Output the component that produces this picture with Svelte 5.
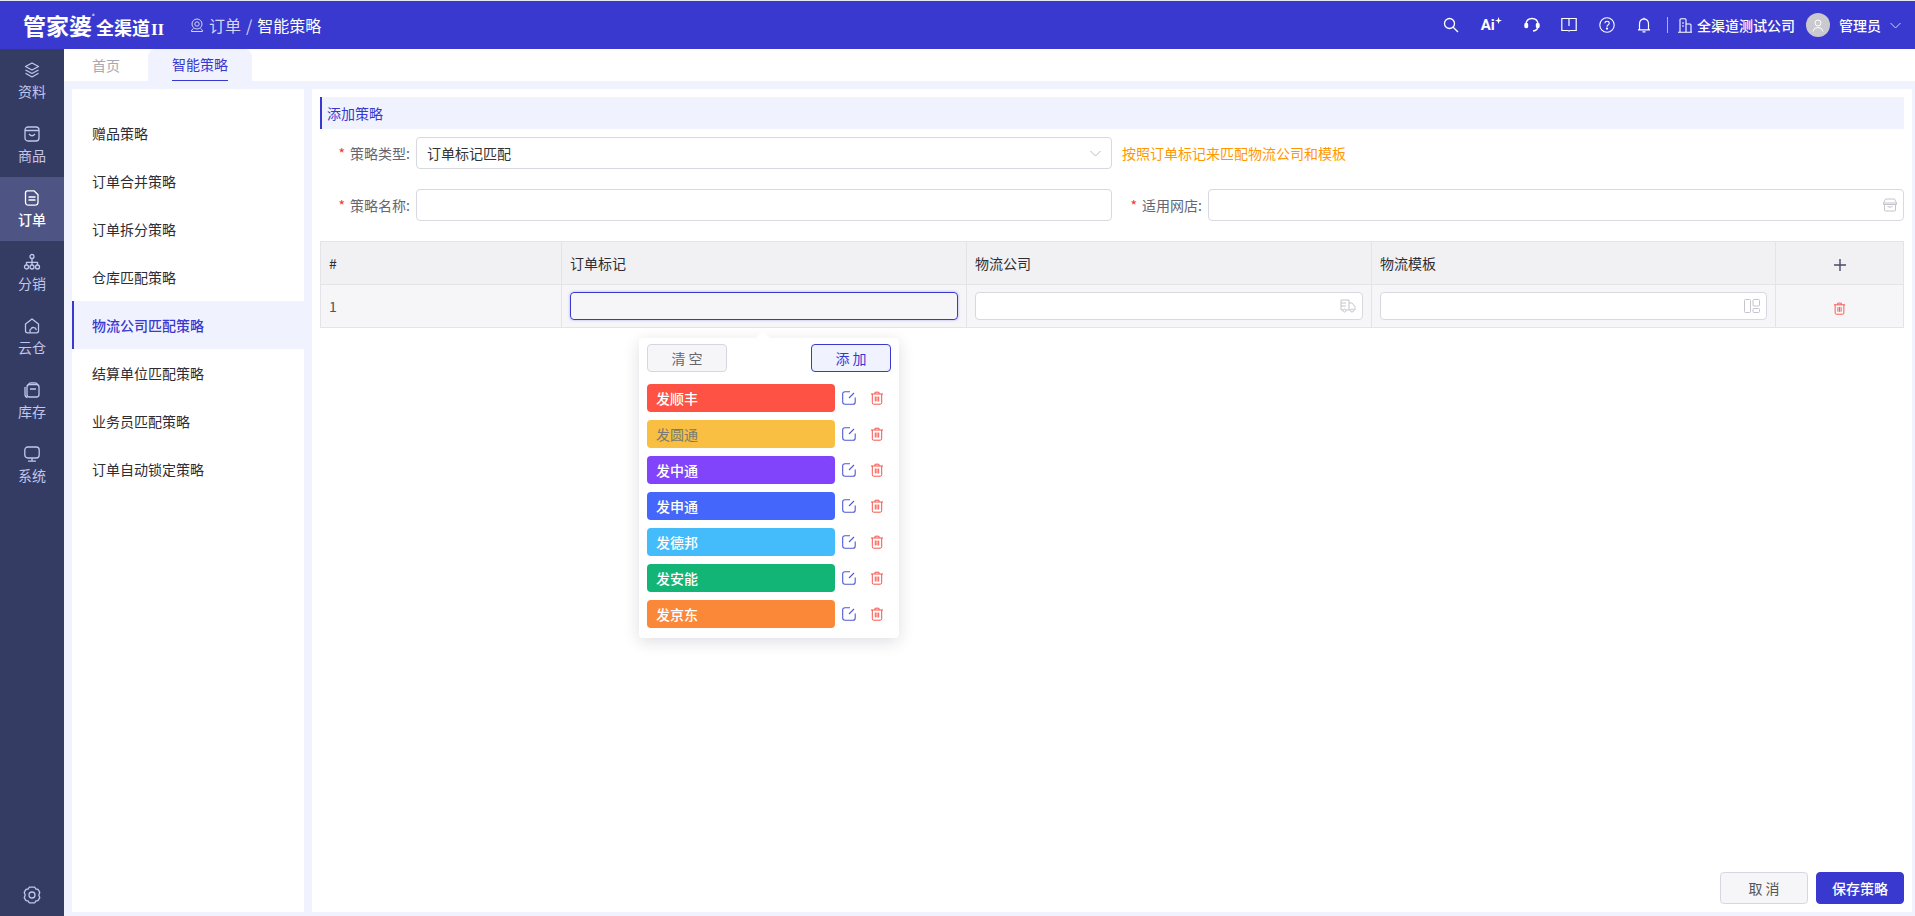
<script lang="ts">
  const railItems = [
    { id: "data", label: "资料" },
    { id: "goods", label: "商品" },
    { id: "order", label: "订单", active: true },
    { id: "dist", label: "分销" },
    { id: "cloud", label: "云仓" },
    { id: "stock", label: "库存" },
    { id: "system", label: "系统" },
  ];

  const strategies = ["赠品策略", "订单合并策略", "订单拆分策略", "仓库匹配策略", "物流公司匹配策略", "结算单位匹配策略", "业务员匹配策略", "订单自动锁定策略"];
  let activeStrategy = $state("物流公司匹配策略");

  const tags = [
    { label: "发顺丰", color: "#fd5244" },
    { label: "发圆通", color: "#f8bf42", muted: true },
    { label: "发中通", color: "#8244fa" },
    { label: "发申通", color: "#4466fb" },
    { label: "发德邦", color: "#44bbfb" },
    { label: "发安能", color: "#12b575" },
    { label: "发京东", color: "#fa8838" },
  ];
</script>

{#snippet trash(size = 14)}
  <svg class="trash" width={size} height={size} viewBox="0 0 14 14" fill="none" stroke="currentColor" stroke-width="1">
    <path d="M1 3h12M5 3V1.2h4V3M2.3 3v8.8q0 1.4 1.4 1.4h6.6q1.4 0 1.4-1.4V3M5.3 5.5v5M7 5.5v5M8.7 5.5v5" />
  </svg>
{/snippet}

{#snippet edit()}
  <svg class="edit" width="14" height="14" viewBox="0 0 14 14" fill="none" stroke="currentColor" stroke-width="1.1">
    <path d="M8 .8H3Q.7.8.7 3v8q0 2.2 2.3 2.2h8q2.2 0 2.2-2.3V6.5" />
    <path d="M7 7l5-5" />
  </svg>
{/snippet}

{#snippet railIcon(id: string)}
  <svg width="18" height="18" viewBox="0 0 18 18" fill="none" stroke="currentColor" stroke-width="1.3" stroke-linejoin="round">
    {#if id === "data"}
      <path d="M9 2l6.5 3.5L9 9 2.500 5.500zM2.500 9L9 12.500 15.500 9M2.500 12.300L9 16l6.500-3.700" />
    {:else if id === "goods"}
      <rect x="2" y="2" width="14" height="14" rx="3" /><path d="M2 5.500h14M6 9q3 3.500 6 0" />
    {:else if id === "order"}
      <path d="M4.500 1.800h6.500l4 4V13q0 3.200-3.200 3.200H5.500Q2.500 16.200 2.500 13V4q0-2.200 2-2.200zM5.500 8h7M5.500 11h7" />
    {:else if id === "dist"}
      <circle cx="9" cy="3.500" r="2" /><circle cx="3.500" cy="14" r="2" /><circle cx="9" cy="14" r="2" /><circle cx="14.500" cy="14" r="2" /><path d="M9 5.500V12M3.500 12V9.300h11V12" />
    {:else if id === "cloud"}
      <path d="M7 15.800H4.500Q2.500 15.800 2.500 13.800V7L9 2l6.500 5v6.800q0 2-2 2H7zM7.500 15q-1.500-2 .5-3 .8-2 3-1.300 2.300.2 2 2.500" />
    {:else if id === "stock"}
      <rect x="4" y="3.500" width="12" height="12.500" rx="2.500" /><path d="M2 6v7.500Q2 16 4.500 16.500M5.500 3.500Q6 1.800 8 1.800h4q2 0 2.500 1.700M7 8h6" />
    {:else if id === "system"}
      <rect x="1.800" y="2" width="14.400" height="11" rx="3" /><path d="M9 13v3M5 16.200h8" />
    {/if}
  </svg>
{/snippet}

<div class="app">
  <header class="topbar">
    <div class="logo"><span class="logo-main">管家婆</span><sup>®</sup><span class="logo-sub">全渠道</span><span class="logo-ii">II</span></div>
    <div class="crumbs">
      <svg width="14" height="15" viewBox="0 0 14 15" fill="none" stroke="currentColor" stroke-width="1">
        <circle cx="7" cy="6" r="5" /><circle cx="7" cy="6" r="2.200" /><path d="M3.500 10.500Q1 12 1.500 13.500h11q.5-1.500-2-3" />
      </svg>
      <span class="crumb-parent">订单</span>
      <span class="crumb-sep">/</span>
      <span class="crumb-current">智能策略</span>
    </div>

    <div class="tools">
      <svg width="16" height="16" viewBox="0 0 16 16" fill="none" stroke="currentColor" stroke-width="1.300"><circle cx="6.500" cy="6.500" r="5" /><path d="M10.200 10.200L15 15" /></svg>
      <span class="ai">Ai<svg width="7" height="7" viewBox="0 0 8 8"><path d="M4 0l1 3 3 1-3 1-1 3-1-3-3-1 3-1z" fill="currentColor" /></svg></span>
      <svg width="16" height="16" viewBox="0 0 16 16" fill="none" stroke="currentColor" stroke-width="1.400"><path d="M2 9V7q.500-5.500 6-5.500T14 7v2q0 4.500-5 5" /><rect x="1" y="6.500" width="2.500" height="4" rx="1" fill="currentColor" /><rect x="12.500" y="6.500" width="2.500" height="4" rx="1" fill="currentColor" /></svg>
      <svg width="16" height="16" viewBox="0 0 16 16" fill="none" stroke="currentColor" stroke-width="1.200"><path d="M.800 1.500h14.400v12H9q-1 0-1 1-.1-1-1-1H.800zM8 1.500V9" /></svg>
      <svg width="16" height="16" viewBox="0 0 16 16" fill="none" stroke="currentColor" stroke-width="1.100"><circle cx="8" cy="8" r="7.200" /><path d="M5.800 6.300Q6 4.300 8 4.300q2.200 0 2.200 1.900 0 1.100-1.200 1.700Q8 8.400 8 9.800" /><circle cx="8" cy="11.600" r=".6" fill="currentColor" /></svg>
      <svg width="14" height="16" viewBox="0 0 14 16" fill="none" stroke="currentColor" stroke-width="1.200"><path d="M1 12.800h12M2.500 12.800V7q0-4.800 4.500-5.200Q11.500 2.200 11.500 7v5.800M5.500 14.800h3M7 1.800V.8" /></svg>
    </div>
    <span class="divider"></span>
    <div class="company">
      <svg width="14" height="15" viewBox="0 0 14 15" fill="none" stroke="currentColor" stroke-width="1.100"><path d="M0 14.300h14M2 14.300V1.800q0-1 1-1h4q1 0 1 1v12.500M8 6h4q1 0 1 1v7.300M4 5h2M4 8h2" /></svg>
      <span>全渠道测试公司</span>
    </div>
    <span class="avatar">
      <svg width="12" height="13" viewBox="0 0 12 13" fill="none" stroke="#fff" stroke-width="1"><circle cx="6" cy="4" r="3" /><path d="M1 12.500Q1.500 8.500 6 8.500t5 4" /></svg>
    </span>
    <span class="user">管理员</span>
    <svg class="chevron" width="11" height="7" viewBox="0 0 11 7" fill="none" stroke="currentColor" stroke-width="1"><path d="M.500 1l5 5 5-5" /></svg>
  </header>

  <div class="body">
    <aside class="rail">
      {#each railItems as item (item.id)}
        <div class="rail-item" class:active={item.active}>
          {@render railIcon(item.id)}
          <span>{item.label}</span>
        </div>
      {/each}
      <div class="rail-gear">
        <svg width="20" height="20" viewBox="0 0 20 20" fill="none" stroke="currentColor" stroke-width="1.300" stroke-linejoin="round">
          <path d="M7.200 2.200h5.600l1 1.800 2.200.3 1.800 3-1 2.700 1 2.700-1.800 3-2.200.3-1 1.800H7.200l-1-1.800-2.200-.3-1.800-3 1-2.700-1-2.700 1.800-3 2.200-.3z" />
          <circle cx="10" cy="10" r="3" />
        </svg>
      </div>
    </aside>

    <div class="page">
      <div class="tabs">
        <span class="tab">首页</span>
        <span class="tab current"><span>智能策略</span></span>
      </div>

      <div class="work">
        <nav class="strategies">
          {#each strategies as name (name)}
            <button type="button" class="strategy" class:active={name === activeStrategy} onclick={() => (activeStrategy = name)}>{name}</button>
          {/each}
        </nav>

        <main class="editor">
          <div class="section-title">添加策略</div>

          <div class="form-row first">
            <label class="field-label" for="kind">策略类型:</label>
            <div class="select" id="kind">
              <span>订单标记匹配</span>
              <svg width="11" height="7" viewBox="0 0 11 7" fill="none" stroke="#b9b9c4" stroke-width="1"><path d="M.500 1l5 5 5-5" /></svg>
            </div>
            <span class="hint">按照订单标记来匹配物流公司和模板</span>
          </div>

          <div class="form-row">
            <label class="field-label" for="name">策略名称:</label>
            <input class="text-input name" id="name" />
            <label class="field-label" for="shop">适用网店:</label>
            <div class="with-icon grow">
              <input class="text-input" id="shop" />
              <svg width="14" height="14" viewBox="0 0 14 14" fill="none" stroke="#c4c4cc" stroke-width="1"><path d="M2.500 1h9L13.500 5v1.500H.5V5zM1.500 6.500V12q0 1 1 1h9q1 0 1-1V6.500M.5 5h13M4.500 8.500q2.500 1.500 5 0" /></svg>
            </div>
          </div>

          <table class="rules">
            <colgroup>
              <col style="width: 241px" /><col style="width: 405px" /><col style="width: 405px" /><col style="width: 404px" /><col />
            </colgroup>
            <thead>
              <tr>
                <th>#</th>
                <th>订单标记</th>
                <th>物流公司</th>
                <th>物流模板</th>
                <th class="center">
                  <svg width="12" height="12" viewBox="0 0 12 12" stroke="#4a4a68" stroke-width="1.400"><path d="M6 0v12M0 6h12" /></svg>
                </th>
              </tr>
            </thead>
            <tbody>
              <tr>
                <td>1</td>
                <td class="mark-cell">
                  <div class="mark-input"></div>
                  <div class="popover">
                    <div class="pop-actions">
                      <button type="button" class="pop-btn">清 空</button>
                      <button type="button" class="pop-btn primary">添 加</button>
                    </div>
                    {#each tags as tag (tag.label)}
                      <div class="tag-row">
                        <span class="tag" class:muted={tag.muted} style="background: {tag.color}">{tag.label}</span>
                        <span class="tag-icon">{@render edit()}</span>
                        <span class="tag-icon">{@render trash()}</span>
                      </div>
                    {/each}
                  </div>
                </td>
                <td>
                  <div class="with-icon">
                    <input class="text-input small" />
                    <svg width="16" height="14" viewBox="0 0 16 14" fill="none" stroke="#c4c4cc" stroke-width="1"><path d="M3 11H1V1h8v10H6M9 4h3l3 3.500V11h-1.500M9 11h1.500M1 4h5M1 7h5" /><circle cx="4.500" cy="11.500" r="1.500" /><circle cx="12" cy="11.500" r="1.500" /></svg>
                  </div>
                </td>
                <td>
                  <div class="with-icon">
                    <input class="text-input small" />
                    <svg width="16" height="14" viewBox="0 0 16 14" fill="none" stroke="#c4c4cc" stroke-width="1"><rect x=".5" y=".5" width="6" height="13" rx="1" /><rect x="9" y=".5" width="6.500" height="6.500" rx="1" /><rect x="9" y="9.500" width="6.500" height="4" rx="1" /></svg>
                  </div>
                </td>
                <td class="center">{@render trash(13)}</td>
              </tr>
            </tbody>
          </table>

          <div class="footer">
            <button type="button" class="foot-btn">取 消</button>
            <button type="button" class="foot-btn save">保存策略</button>
          </div>
        </main>
      </div>
    </div>
  </div>
</div>

<style>
  :global(body) {
    margin: 0;
    overflow: hidden;
    font-family: "Noto Sans CJK SC", "Noto Sans", sans-serif;
    font-size: 14px;
    color: #333;
  }
  .app {
    display: flex;
    flex-direction: column;
    height: 916px;
    padding-top: 1px;
    box-sizing: border-box;
    background: #e8e8ee;
  }
  button {
    font: inherit;
    cursor: pointer;
  }

  /* top bar */
  .topbar {
    display: flex;
    align-items: center;
    flex: none;
    height: 48px;
    background: #3939d0;
    color: #fff;
  }
  .logo {
    display: flex;
    align-items: baseline;
    margin-left: 23px;
    width: 150px;
    font-weight: 700;
    white-space: nowrap;
  }
  .logo-main {
    font-size: 23px;
    line-height: 28px;
  }
  .logo sup {
    font-size: 5px;
    width: 4px;
    align-self: flex-start;
    line-height: 10px;
  }
  .logo-sub {
    font-size: 18px;
  }
  .logo-ii {
    font-family: "Liberation Serif", serif;
    font-size: 17px;
    margin-left: 1px;
  }
  .crumbs {
    display: flex;
    align-items: center;
    margin-left: 17px;
    font-size: 16px;
    color: #d5d5f5;
  }
  .crumb-parent {
    margin-left: 5px;
  }
  .crumb-sep {
    margin: 0 5px;
  }
  .crumb-current {
    color: #fff;
  }
  .tools {
    display: flex;
    align-items: center;
    justify-content: space-between;
    margin-left: auto;
    width: 208px;
  }
  .ai {
    display: flex;
    align-items: flex-start;
    font-family: "Roboto", sans-serif;
    font-size: 15px;
    font-weight: 700;
    line-height: 18px;
  }
  .ai svg {
    margin-top: 1px;
  }
  .divider {
    width: 1px;
    height: 16px;
    margin-left: 16px;
    background: rgba(255, 255, 255, 0.6);
  }
  .company {
    display: flex;
    align-items: center;
    gap: 5px;
    margin-left: 10px;
    font-weight: 500;
  }
  .avatar {
    display: flex;
    align-items: center;
    justify-content: center;
    width: 24px;
    height: 24px;
    margin-left: 11px;
    border-radius: 50%;
    background: #c9c9cf;
  }
  .user {
    margin-left: 9px;
    font-weight: 500;
  }
  .chevron {
    margin: 0 14px 0 9px;
    color: #cfcff2;
  }

  /* left rail */
  .body {
    display: flex;
    flex: 1;
    min-height: 0;
  }
  .rail {
    display: flex;
    flex-direction: column;
    flex: none;
    width: 64px;
    background: #353c63;
    color: #c0c6ec;
  }
  .rail-item {
    display: flex;
    flex-direction: column;
    align-items: center;
    justify-content: center;
    gap: 2px;
    height: 64px;
    font-size: 14px;
    line-height: 20px;
  }
  .rail-item.active {
    background: #4e5585;
    color: #fff;
    font-weight: 500;
  }
  .rail-gear {
    display: flex;
    justify-content: center;
    margin-top: auto;
    padding-bottom: 11px;
  }

  /* tabs */
  .page {
    display: flex;
    flex-direction: column;
    flex: 1;
    min-width: 0;
    background: #f0f2fe;
  }
  .tabs {
    display: flex;
    flex: none;
    height: 32px;
    background: #fff;
  }
  .tab {
    display: flex;
    justify-content: center;
    align-items: center;
    width: 84px;
    color: #a8a8ae;
    line-height: 30px;
  }
  .tab.current {
    width: 104px;
    background: #f0f2fe;
    border-radius: 8px 8px 0 0;
    color: #3939d0;
  }
  .tab.current span {
    height: 31px;
    border-bottom: 1px solid #3939d0;
  }

  /* strategy list */
  .work {
    display: flex;
    flex: 1;
    gap: 8px;
    min-height: 0;
    padding: 8px 3px 4px 8px;
  }
  .strategies {
    display: flex;
    flex-direction: column;
    flex: none;
    width: 232px;
    padding-top: 20px;
    box-sizing: border-box;
    background: #fff;
  }
  .strategy {
    height: 48px;
    padding: 0 0 0 20px;
    border: 0;
    border-left: 0 solid transparent;
    background: none;
    color: #2d2d33;
    text-align: left;
  }
  .strategy.active {
    padding-left: 18px;
    border-left: 2px solid #3939d0;
    background: #f0f2fe;
    color: #3939d0;
    font-weight: 500;
  }

  /* editor */
  .editor {
    display: flex;
    flex-direction: column;
    flex: 1;
    min-width: 0;
    padding: 8px;
    background: #fff;
  }
  .section-title {
    flex: none;
    height: 32px;
    padding-left: 5px;
    border-left: 2px solid #3939d0;
    background: #f0f2fe;
    color: #3939d0;
    line-height: 32px;
  }
  .form-row {
    display: flex;
    align-items: center;
    flex: none;
    height: 32px;
    margin-top: 20px;
  }
  .form-row.first {
    margin-top: 8px;
  }
  .field-label {
    flex: none;
    width: 96px;
    padding-right: 6px;
    box-sizing: border-box;
    color: #666670;
    text-align: right;
  }
  .field-label::before {
    content: "*";
    margin-right: 5px;
    color: #f5362b;
  }
  .select {
    display: flex;
    align-items: center;
    justify-content: space-between;
    flex: none;
    width: 696px;
    height: 32px;
    padding: 0 10px;
    box-sizing: border-box;
    border: 1px solid #d8d8e0;
    border-radius: 4px;
    color: #333;
  }
  .hint {
    margin-left: 10px;
    color: #ff9800;
  }
  .text-input {
    display: block;
    width: 100%;
    height: 32px;
    padding: 0 8px;
    box-sizing: border-box;
    border: 1px solid #d8d8e0;
    border-radius: 4px;
    background: #fff;
    outline: none;
  }
  .text-input.name {
    flex: none;
    width: 696px;
  }
  .text-input.small {
    height: 28px;
  }
  .with-icon {
    position: relative;
  }
  .with-icon.grow {
    flex: 1;
  }
  .with-icon svg {
    position: absolute;
    top: 50%;
    right: 7px;
    transform: translateY(-50%);
  }

  /* rule table */
  .rules {
    flex: none;
    width: 100%;
    margin-top: 20px;
    border-collapse: collapse;
    table-layout: fixed;
  }
  .rules th,
  .rules td {
    height: 43px;
    padding: 0 8px;
    box-sizing: border-box;
    border: 1px solid #e3e3e8;
    text-align: left;
  }
  .rules th {
    background: #f1f1f4;
    color: #2d2d33;
    font-weight: 400;
  }
  .rules td {
    background: #f6f6f9;
    color: #555;
  }
  .rules .center {
    text-align: center;
    vertical-align: middle;
  }
  .rules td.center svg,
  .rules th.center svg {
    display: inline-block;
    vertical-align: middle;
  }
  .mark-cell {
    position: relative;
  }
  .mark-input {
    height: 28px;
    box-sizing: border-box;
    border: 1px solid #3939d0;
    border-radius: 4px;
    box-shadow: 0 0 3px rgba(57, 57, 208, 0.4);
  }
  .trash {
    color: #f9534a;
  }
  .edit {
    color: #5058d4;
  }

  /* tag popover */
  .popover {
    position: absolute;
    top: 53px;
    left: 77px;
    z-index: 5;
    width: 260px;
    height: 300px;
    padding: 6px 8px 0;
    box-sizing: border-box;
    border-radius: 4px;
    background: #fff;
    box-shadow: 0 4px 16px rgba(30, 30, 60, 0.14);
  }
  .popover::before {
    content: "";
    position: absolute;
    top: -7px;
    left: 117px;
    border: 7px solid transparent;
    border-top: 0;
    border-bottom-color: #fff;
  }
  .pop-actions {
    display: flex;
    justify-content: space-between;
    margin-bottom: 12px;
  }
  .pop-btn {
    width: 80px;
    height: 28px;
    padding: 0;
    border: 1px solid #d6d6e2;
    border-radius: 4px;
    background: #f6f6f9;
    color: #666670;
  }
  .pop-btn.primary {
    border-color: #3939d0;
    background: #f0f2fe;
    color: #3939d0;
  }
  .tag-row {
    display: flex;
    align-items: center;
    height: 28px;
    margin-bottom: 8px;
  }
  .tag {
    flex: none;
    width: 188px;
    height: 28px;
    padding-left: 9px;
    box-sizing: border-box;
    border-radius: 4px;
    color: #fff;
    font-weight: 500;
    line-height: 28px;
  }
  .tag.muted {
    color: #7a7a70;
    font-weight: 400;
  }
  .tag-icon {
    display: flex;
    justify-content: center;
    width: 28px;
  }

  /* footer */
  .footer {
    display: flex;
    justify-content: flex-end;
    gap: 8px;
    margin-top: auto;
  }
  .foot-btn {
    width: 88px;
    height: 32px;
    padding: 0;
    border: 1px solid #d6d6e2;
    border-radius: 4px;
    background: #f6f6f9;
    color: #555;
  }
  .foot-btn.save {
    border-color: #3939d0;
    background: #3939d0;
    color: #fff;
    font-weight: 500;
  }
</style>
